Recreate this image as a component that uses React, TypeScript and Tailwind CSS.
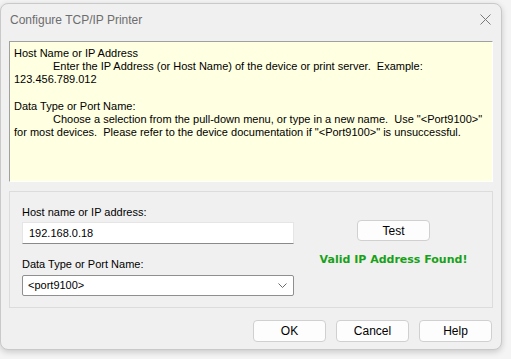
import React from "react";

const tahoma = { fontFamily: '"Liberation Sans", Arial, sans-serif' };
const segoe = { fontFamily: '"Liberation Sans", Arial, sans-serif' };

export default function App() {
  return (
    <div className="w-[511px] h-[359px] bg-[#f4f4f4] pt-[3px] overflow-hidden">
      <div className="w-[502px] h-[347px] rounded-[8px] border border-[#c9c9c9] bg-[#f0f0f0] shadow-[0_2px_6px_rgba(0,0,0,0.18)] flex flex-col">
        {/* title bar */}
        <div className="h-[31px] flex items-center justify-between pl-[9px] pr-[9px]">
          <span className="text-[12px] text-[#6d6d6d]" style={segoe}>
            Configure TCP/IP Printer
          </span>
          <svg width="11" height="11" viewBox="0 0 11 11" className="mr-[1px]">
            <path d="M0.5 0.5 L10.5 10.5 M10.5 0.5 L0.5 10.5" stroke="#7a7a7a" strokeWidth="1" fill="none" />
          </svg>
        </div>

        {/* info box */}
        <div
          className="mx-[8px] mt-[6px] h-[141px] bg-[#ffffe1] border-t border-l border-[#a0a0a0] border-r-[#ffffff] border-b-[#ffffff] border-r border-b pl-[4px] pt-[5px] text-[11px] leading-[13.2px] text-black whitespace-pre"
          style={tahoma}
        >
          <div>Host Name or IP Address</div>
          <div className="pl-[39px]">Enter the IP Address (or Host Name) of the device or print server.  Example:</div>
          <div>123.456.789.012</div>
          <div>&nbsp;</div>
          <div>Data Type or Port Name:</div>
          <div className="pl-[39px]">Choose a selection from the pull-down menu, or type in a new name.  Use "&lt;Port9100&gt;"</div>
          <div>for most devices.  Please refer to the device documentation if "&lt;Port9100&gt;" is unsuccessful.</div>
        </div>

        {/* group box */}
        <div className="mx-[8px] mt-[9px] h-[117px] border border-[#dcdcdc] flex">
          <div className="w-[285px] pl-[12px] pt-[12px] flex flex-col">
            <div className="text-[11px] leading-[16px] text-black" style={segoe}>
              Host name or IP address:
            </div>
            <div className="mt-[2px] w-[272px] h-[22px] bg-white border border-[#e5e5e5] border-b-[#8a8a8a] flex items-center pl-[6px] text-[11px] text-black" style={tahoma}>
              192.168.0.18
            </div>
            <div className="mt-[12px] text-[11px] leading-[16px] text-black" style={segoe}>
              Data Type or Port Name:
            </div>
            <div className="mt-[3px] w-[272px] h-[21px] bg-white border border-[#8f8f8f] rounded-[2px] flex items-center justify-between pl-[5px] pr-[6px] text-[11px] text-black" style={tahoma}>
              <span>&lt;port9100&gt;</span>
              <svg width="9" height="5" viewBox="0 0 9 5">
                <path d="M0.5 0.5 L4.5 4.5 L8.5 0.5" stroke="#6a6a6a" strokeWidth="1" fill="none" />
              </svg>
            </div>
          </div>
          <div className="flex-1 flex flex-col items-center pt-[28px]">
            <div className="w-[73px] h-[21px] rounded-[4px] border border-[#d0d0d0] bg-[#fdfdfd] flex items-center justify-center text-[12px] text-black" style={segoe}>
              Test
            </div>
            <div className="mt-[11px] font-bold text-[#17a117] leading-[16px]" style={{ fontFamily: '"DejaVu Sans", Verdana, sans-serif', fontSize: "11px" }}>
              Valid IP Address Found!
            </div>
          </div>
        </div>

        {/* buttons */}
        <div className="mt-[12px] flex justify-end gap-[10px] pr-[9px]">
          {["OK", "Cancel", "Help"].map((t) => (
            <div
              key={t}
              className="w-[73px] h-[22px] rounded-[4px] border border-[#d0d0d0] bg-[#fdfdfd] flex items-center justify-center text-[12px] text-black"
              style={segoe}
            >
              {t}
            </div>
          ))}
        </div>
      </div>
    </div>
  );
}
